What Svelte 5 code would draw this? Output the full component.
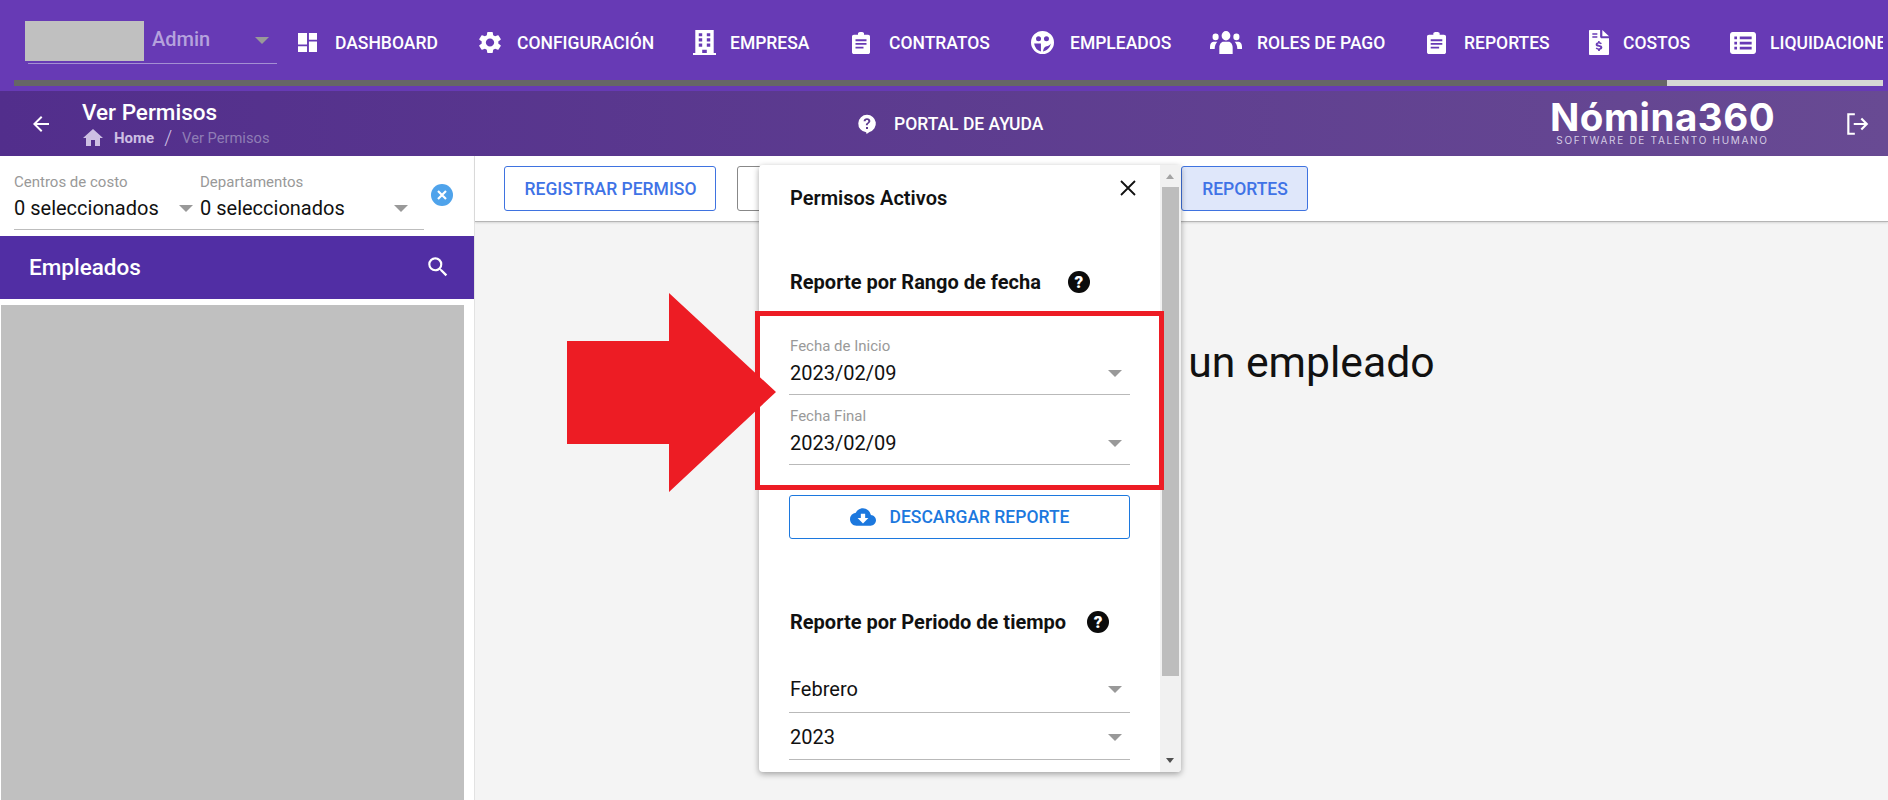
<script>
  const nav = [
    { label: 'DASHBOARD', icon: 'dashboard', w: 19, h: 19, vb: '2 2 20 20', gap: 18, span: 181 },
    { label: 'CONFIGURACIÓN', icon: 'gear', w: 22, h: 23, vb: '2.5 1.5 19 21', gap: 16, span: 214 },
    { label: 'EMPRESA', icon: 'building', w: 23, h: 25, vb: '2 0 20 24', gap: 14, span: 159 },
    { label: 'CONTRATOS', icon: 'clip', w: 18, h: 22, vb: '3 0 18 24', gap: 19, span: 179 },
    { label: 'EMPLEADOS', icon: 'face', w: 23, h: 23, vb: '1 1 22 22', gap: 16, span: 179 },
    { label: 'ROLES DE PAGO', icon: 'users', w: 32, h: 23, vb: '0 4 24 16', gap: 15, span: 217 },
    { label: 'REPORTES', icon: 'clip', w: 19, h: 22, vb: '3 0 18 24', gap: 18, span: 162 },
    { label: 'COSTOS', icon: 'bill', w: 20, h: 25, vb: '3 0 18 24', gap: 14, span: 141 },
    { label: 'LIQUIDACIONES', icon: 'list', w: 26, h: 22, vb: '0 2 24 20', gap: 14, span: 200 }
  ];
</script>

<div class="page">
  <header class="topbar">
    <div class="user-row">
      <div class="user-select">
        <div class="avatar"></div>
        <span class="role">Admin</span>
        <span class="caret role-caret"></span>
      </div>
      <nav class="nav">
        {#each nav as item}
          <div class="nav-item" style="width:{item.span}px;gap:{item.gap}px">
            <svg style="width:{item.w}px;height:{item.h}px" viewBox={item.vb} preserveAspectRatio="none" fill="#fff" fill-rule="evenodd">
              {#if item.icon === 'dashboard'}
                <path d="M2 2h9.500v12H2zM13.500 2H22v7h-8.500zM13.500 11H22v11h-8.500zM2 16h9.500v6H2z" />
              {:else if item.icon === 'gear'}
                <path d="M19.140 12.940c.04-.3.06-.61.06-.94 0-.32-.02-.64-.07-.94l2.030-1.580c.18-.14.23-.41.12-.61l-1.920-3.320c-.12-.22-.37-.29-.59-.22l-2.390.96c-.5-.38-1.030-.7-1.620-.94l-.36-2.540c-.04-.24-.24-.41-.48-.41h-3.840c-.24 0-.43.17-.47.41l-.36 2.540c-.59.24-1.130.57-1.620.94l-2.390-.96c-.22-.08-.47 0-.59.22L2.740 8.870c-.12.21-.08.47.12.61l2.030 1.580c-.05.3-.09.63-.09.94s.02.64.07.94l-2.030 1.580c-.18.14-.23.41-.12.61l1.920 3.320c.12.22.37.29.59.22l2.390-.96c.5.38 1.030.7 1.620.94l.36 2.540c.05.24.24.41.48.41h3.840c.24 0 .44-.17.47-.41l.36-2.540c.59-.24 1.130-.56 1.620-.94l2.390.96c.22.08.47 0 .59-.22l1.920-3.320c.12-.22.07-.47-.12-.61l-2.010-1.580zM12 15.600c-1.980 0-3.600-1.620-3.600-3.600s1.620-3.600 3.600-3.600 3.600 1.620 3.600 3.600-1.620 3.600-3.600 3.600z" />
              {:else if item.icon === 'building'}
                <path d="M4 0h16v22h2v2H2v-2h2zM7 3v3h3V3zM14 3v3h3V3zM7 8v3h3V8zM14 8v3h3V8zM7 13v3h3v-3zM14 13v3h3v-3zM10 19v3h4v-3z" />
              {:else if item.icon === 'clip'}
                <path d="M9 1.500 C9 .6 10 0 12 0 S15 .6 15 1.500 V3 h4 c1.200 0 2 .8 2 2 v17 c0 1.200-.8 2-2 2 H5 c-1.200 0-2-.8-2-2 V5 c0-1.200.8-2 2-2 h4 z M6.500 8v2h11V8z M6.500 12v2h11v-2z M6.500 16v2h8v-2z" />
              {:else if item.icon === 'face'}
                <path d="M12 1a11 11 0 1 0 0 22a11 11 0 0 0 0-22z M8.200 6a2.400 2.400 0 1 1 0 4.800a2.400 2.400 0 0 1 0-4.800z M15.800 6a2.400 2.400 0 1 1 0 4.800a2.400 2.400 0 0 1 0-4.800z M4 13h6.500v7.500a9 9 0 0 1-6.500-7.500z M12.500 20.500c.5-3 1.500-5 3.500-5 1.500 0 2.800-.8 4-2.500-.8 4-3.800 7-7.500 7.500z" />
              {:else if item.icon === 'users'}
                <path d="M12 4a3.300 3.300 0 1 1 0 6.600a3.300 3.300 0 0 1 0-6.600z M4.200 5.800a2.300 2.300 0 1 1 0 4.600a2.300 2.300 0 0 1 0-4.600z M19.800 5.800a2.300 2.300 0 1 1 0 4.600a2.300 2.300 0 0 1 0-4.600z M7 20v-4.500c0-2.400 1.600-4 3-4h4c1.400 0 3 1.600 3 4V20z M0 15c0-2 1-3.500 2.500-3.500h3c-1 1-2 2.500-2 5H0z M24 15c0-2-1-3.500-2.500-3.500h-3c1 1 2 2.500 2 5H24z" />
              {:else if item.icon === 'bill'}
                <path d="M4 0h9v6.500c0 .8.7 1.500 1.500 1.500H21v15c0 .6-.4 1-1 1H4c-.6 0-1-.4-1-1V1c0-.6.4-1 1-1z M15 0l6 6h-6z M6 3v1.500h4.500V3z M6 6v1.500h4.500V6z M11.200 10.500v1.200c-1.400.2-2.200 1.100-2.200 2.200 0 2.800 4.200 1.600 4.200 3 0 .5-.5.8-1.200.8-.8 0-1.500-.3-2-.9l-1 1c.5.6 1.300 1 2.200 1.100v1.300h1.600v-1.300c1.400-.2 2.200-1.100 2.200-2.200 0-2.900-4.200-1.600-4.200-3 0-.5.4-.7 1.100-.7.6 0 1.200.2 1.700.7l1-1c-.5-.5-1.100-.9-2-1v-1.200z" />
              {:else if item.icon === 'list'}
                <path d="M2.500 2h19c1.400 0 2.500 1.100 2.500 2.500v15c0 1.400-1.100 2.500-2.500 2.500h-19C1.100 22 0 20.900 0 19.500v-15C0 3.100 1.100 2 2.500 2z M4 6v2.500h2.500V6z M9 6v2.500h11V6z M4 10.800v2.500h2.500v-2.500z M9 10.800v2.500h11v-2.500z M4 15.500V18h2.500v-2.500z M9 15.500V18h11v-2.500z" />
              {/if}
            </svg>
            <span>{item.label}</span>
          </div>
        {/each}
      </nav>
    </div>
    <div class="hscroll"><div class="hthumb"></div></div>
  </header>

  <div class="subbar">
    <svg class="back" viewBox="0 0 24 24" fill="#fff"><path d="M20 11H7.830l5.590-5.590L12 4l-8 8 8 8 1.410-1.410L7.830 13H20v-2z" /></svg>
    <div class="crumbs">
      <div class="page-title">Ver Permisos</div>
      <div class="path">
        <svg class="home" viewBox="0 0 24 24" fill="#cdbfe3"><path d="M10 20v-6h4v6h5v-8h3L12 3 2 12h3v8z" /></svg>
        <b>Home</b>
        <span class="slash">/</span>
        <span class="here">Ver Permisos</span>
      </div>
    </div>
    <div class="help-link">
      <svg class="help-bubble" viewBox="0 0 24 24" fill="#fff" fill-rule="evenodd">
        <path d="M12 1a10.500 10.500 0 0 1 3 20.600L11.500 24l-.5-2.050A10.500 10.500 0 0 1 12 1z M12 5c-2.400 0-4 1.500-4.100 3.800h2.400c.1-1 .7-1.600 1.700-1.600s1.600.6 1.600 1.400c0 1.800-3 1.800-3 5h2.300c0-2.300 3.100-2.500 3.100-5.100C16 6.500 14.400 5 12 5z M10.800 15.500v2.400h2.400v-2.400z" />
      </svg>
      <span>PORTAL DE AYUDA</span>
    </div>
    <div class="logo">
      <div class="logo-name">Nómina360</div>
      <div class="logo-sub">SOFTWARE DE TALENTO HUMANO</div>
    </div>
    <svg class="logout" viewBox="0 0 24 24" fill="none" stroke="#fff" stroke-width="2">
      <path d="M10 3H4v18h6M9 12h12M16 7l5 5-5 5" />
    </svg>
  </div>

  <div class="content">
    <aside class="sidebar">
      <div class="filters">
        <div class="filter first">
          <label for="cc">Centros de costo</label>
          <div class="value" id="cc">0 seleccionados<span class="caret"></span></div>
        </div>
        <div class="filter second">
          <label for="dep">Departamentos</label>
          <div class="value" id="dep">0 seleccionados<span class="caret"></span></div>
        </div>
        <svg class="clear" viewBox="0 0 22 22">
          <circle cx="11" cy="11" r="11" fill="#4fa3eb" />
          <path d="M7 7l8 8M15 7l-8 8" stroke="#fff" stroke-width="2.200" />
        </svg>
      </div>
      <div class="side-head">
        <span>Empleados</span>
        <svg viewBox="0 0 24 24" fill="#fff"><path d="M15.500 14h-.790l-.280-.270A6.470 6.470 0 0 0 16 9.500 6.500 6.500 0 1 0 9.500 16c1.610 0 3.090-.590 4.230-1.570l.270.280v.790l5 4.990L20.490 19l-4.990-5zm-6 0C7.010 14 5 11.990 5 9.500S7.010 5 9.500 5 14 7.010 14 9.500 11.990 14 9.500 14z" /></svg>
      </div>
      <div class="list-mask"></div>
    </aside>

    <main class="main">
      <div class="toolbar">
        <button class="btn">REGISTRAR PERMISO</button>
        <button class="btn muted" aria-label="Permisos activos"></button>
        <button class="btn active">REPORTES</button>
      </div>
      <div class="empty">Seleccione un empleado</div>
    </main>
  </div>

  <section class="modal">
    <div class="modal-body">
      <h2 class="title">Permisos Activos</h2>
      <h3 class="sec-a">Reporte por Rango de fecha <span class="q">?</span></h3>
      <div class="field f1">
        <div class="f-label">Fecha de Inicio</div>
        <div class="f-value">2023/02/09<span class="caret"></span></div>
      </div>
      <div class="field f2">
        <div class="f-label">Fecha Final</div>
        <div class="f-value">2023/02/09<span class="caret"></span></div>
      </div>
      <button class="download">
        <svg viewBox="0 0 24 24" fill="#1c78de"><path d="M19.350 10.040A7.490 7.490 0 0 0 12 4C9.110 4 6.600 5.640 5.350 8.040A5.994 5.994 0 0 0 0 14c0 3.310 2.690 6 6 6h13c2.760 0 5-2.240 5-5 0-2.640-2.050-4.780-4.650-4.960zM17 13l-5 5-5-5h3V9h4v4h3z" /></svg>
        DESCARGAR REPORTE
      </button>
      <h3 class="sec-b">Reporte por Periodo de tiempo <span class="q">?</span></h3>
      <div class="field f3">
        <div class="f-value">Febrero<span class="caret"></span></div>
      </div>
      <div class="field f4">
        <div class="f-value">2023<span class="caret"></span></div>
      </div>
    </div>
    <svg class="close" viewBox="0 0 16 16" stroke="#111" stroke-width="1.800"><path d="M1 1l14 14M15 1L1 15" /></svg>
    <div class="vscroll">
      <span class="up"></span>
      <div class="vthumb"></div>
      <span class="down"></span>
    </div>
  </section>

  <!-- annotations over the screenshot -->
  <div class="red-box"></div>
  <svg class="red-arrow" viewBox="0 0 210 200">
    <path d="M0 48H102V0L209 99 102 199V151H0z" fill="#ed1c24" />
  </svg>
</div>

<style>
  :global(body) {
    margin: 0;
    font-family: Roboto, "Liberation Sans", sans-serif;
  }

  .page {
    position: relative;
    width: 1888px;
    height: 800px;
    overflow: hidden;
    background: #f4f4f4;
  }

  .topbar {
    height: 91px;
    background: #673ab5;
    padding: 0 5px 0 14px;
    box-sizing: border-box;
  }

  .user-row {
    display: flex;
    height: 80px;
    overflow: hidden;
  }

  .user-select {
    position: relative;
    width: 249px;
    height: 42px;
    margin: 21px 0 0 14px;
    border-bottom: 1px solid #a48fd3;
    display: flex;
    flex: none;
  }

  .avatar {
    width: 119px;
    height: 40px;
    margin-left: -3px;
    background: #c0c0c0;
  }

  .role {
    margin-left: 8px;
    font-size: 20px;
    font-weight: 500;
    color: #b5a2dd;
    line-height: 36px;
  }

  .role-caret {
    position: absolute;
    right: 8px;
    top: 16px;
    border-top-color: #8568c0;
  }

  .nav {
    display: flex;
    margin-left: 21px;
    flex: none;
  }

  .nav-item {
    display: flex;
    align-items: center;
    color: #fff;
    font-size: 17.500px;
    font-weight: 500;
    height: 85px;
    white-space: nowrap;
  }

  .nav-item svg {
    flex: none;
  }

  .hscroll {
    height: 6px;
    background: #666;
    display: flex;
    justify-content: flex-end;
  }

  .hthumb {
    width: 216px;
    background: #d6d6d6;
  }

  .subbar {
    height: 65px;
    display: flex;
    align-items: center;
    color: #fff;
    background: linear-gradient(90deg, #522e8c, #684a93);
  }

  .back {
    width: 24px;
    height: 24px;
    margin-left: 29px;
    flex: none;
  }

  .crumbs {
    margin-left: 29px;
    width: 779px;
    flex: none;
  }

  .page-title {
    font-size: 22.500px;
    font-weight: 500;
    line-height: 26px;
  }

  .path {
    display: flex;
    align-items: center;
    margin-top: 2px;
    font-size: 15px;
    color: #cdbfe3;
    height: 22px;
  }

  .home {
    width: 24px;
    height: 24px;
    margin: 0 9px 0 -1px;
  }

  .slash {
    margin: 0 10px;
    font-size: 20px;
    font-weight: 300;
  }

  .here {
    color: #8f7db5;
    font-size: 14.700px;
  }

  .help-link {
    display: flex;
    align-items: center;
    gap: 17px;
    font-size: 17.500px;
    font-weight: 500;
    width: 693px;
    flex: none;
    margin-left: -4px;
  }

  .help-bubble {
    width: 20px;
    height: 22px;
  }

  .logo {
    width: 225px;
    flex: none;
    text-align: center;
    margin-top: -4px;
  }

  .logo-name {
    font-family: Inter, "Liberation Sans", sans-serif;
    font-size: 38.500px;
    font-weight: 700;
    line-height: 38px;
    letter-spacing: 0.500px;
  }

  .logo-sub {
    font-family: Inter, sans-serif;
    font-size: 10px;
    letter-spacing: 1.700px;
    color: #d4cbe4;
    line-height: 12px;
    margin-top: -2px;
    white-space: nowrap;
  }

  .logout {
    width: 26px;
    height: 26px;
    margin-left: 69px;
    flex: none;
  }

  .content {
    display: flex;
    height: 644px;
  }

  .sidebar {
    width: 475px;
    flex: none;
    background: #fff;
    border-right: 1px solid #e2e2e2;
    box-sizing: border-box;
  }

  .filters {
    position: relative;
    display: flex;
    height: 80px;
    padding-left: 14px;
  }

  .filter {
    margin-top: 17px;
    border-bottom: 1px solid #bdbdbd;
    height: 57px;
    box-sizing: border-box;
  }

  .filter.first {
    width: 186px;
  }

  .filter.second {
    width: 224px;
  }

  .filter label {
    display: block;
    font-size: 15px;
    color: #999;
    line-height: 18px;
  }

  .value {
    position: relative;
    font-size: 20px;
    color: #111;
    line-height: 26px;
    margin-top: 4px;
  }

  .filter.first .caret {
    right: 7px;
  }

  .filter.second .caret {
    right: 16px;
  }

  .clear {
    position: absolute;
    left: 431px;
    top: 28px;
    width: 22px;
    height: 22px;
  }

  .caret {
    position: absolute;
    width: 0;
    height: 0;
    border-left: 7px solid transparent;
    border-right: 7px solid transparent;
    border-top: 7px solid #999;
  }

  .value .caret,
  .f-value .caret {
    top: 10px;
  }

  .side-head {
    height: 63px;
    background: #512ea4;
    display: flex;
    align-items: center;
    justify-content: space-between;
    padding: 0 23px 2px 29px;
    box-sizing: border-box;
    color: #fff;
    font-size: 22.500px;
    font-weight: 500;
  }

  .side-head svg {
    width: 26px;
    height: 26px;
  }

  .list-mask {
    width: 463px;
    height: 500px;
    margin: 6px 0 0 1px;
    background: #c0c0c0;
  }

  .main {
    flex: 1;
    min-width: 0;
  }

  .toolbar {
    height: 66px;
    background: #fff;
    border-bottom: 1px solid #b5b5b5;
    box-shadow: 0 1px 2px rgba(0, 0, 0, 0.12);
    box-sizing: border-box;
    display: flex;
    gap: 21px;
    padding: 10px 0 0 29px;
    align-items: flex-start;
  }

  .btn {
    height: 45px;
    width: 212px;
    background: #fff;
    border: 1px solid #3f73e0;
    border-radius: 3px;
    color: #3f73e6;
    font: 500 17.500px Roboto, sans-serif;
    padding: 0 0 0 1px;
  }

  .btn.muted {
    width: 423px;
    border-color: #888;
  }

  .btn.active {
    width: 127px;
    background: #dfe7fa;
  }

  .empty {
    margin: 116px 0 0 496px;
    font-size: 42.700px;
    line-height: 48px;
    color: #111;
    white-space: nowrap;
  }

  .modal {
    position: absolute;
    left: 759px;
    top: 165px;
    width: 422px;
    height: 607px;
    background: #fff;
    border-radius: 4px;
    box-shadow: 0 2px 6px rgba(0, 0, 0, 0.35);
    overflow: hidden;
  }

  .modal-body {
    padding: 21px 0 0 30px;
    width: 341px;
    color: #111;
  }

  .title,
  h3 {
    margin: 0;
    padding-left: 1px;
    font-size: 20px;
    font-weight: 700;
    line-height: 24px;
    white-space: nowrap;
    display: flex;
    align-items: center;
  }

  .title {
    font-weight: 600;
  }

  .q {
    display: inline-flex;
    align-items: center;
    justify-content: center;
    width: 22px;
    height: 22px;
    border-radius: 50%;
    background: #0b0b0b;
    color: #fff;
    font-size: 17px;
    font-weight: 900;
  }

  .sec-a {
    margin-top: 60px;
  }

  .sec-a .q {
    margin-left: 27px;
  }

  .sec-b {
    margin-top: 71px;
  }

  .sec-b .q {
    margin-left: 21px;
  }

  .field {
    border-bottom: 1px solid #b9b9b9;
  }

  .f1 {
    margin-top: 43px;
  }

  .f2 {
    margin-top: 12px;
  }

  .f3 {
    margin-top: 42px;
    padding-bottom: 10px;
  }

  .f4 {
    margin-top: 11px;
    padding-bottom: 9px;
  }

  .f1,
  .f2 {
    padding-bottom: 8px;
  }

  .f-label {
    padding-left: 1px;
    font-size: 15px;
    line-height: 18px;
    color: #999;
  }

  .f-value {
    position: relative;
    padding-left: 1px;
    font-size: 20px;
    line-height: 26px;
  }

  .f1 .f-value,
  .f2 .f-value {
    margin-top: 5px;
  }

  .f-value .caret {
    right: 8px;
  }

  .download {
    display: flex;
    align-items: center;
    justify-content: center;
    gap: 14px;
    width: 100%;
    height: 44px;
    margin-top: 30px;
    background: #fff;
    border: 1px solid #1c78de;
    border-radius: 3px;
    color: #1c78de;
    font: 500 17.500px Roboto, sans-serif;
  }

  .download svg {
    width: 26px;
    height: 26px;
  }

  .close {
    position: absolute;
    left: 361px;
    top: 15px;
    width: 16px;
    height: 16px;
  }

  .vscroll {
    position: absolute;
    right: 0;
    top: 0;
    bottom: 0;
    width: 21px;
    background: #f1f1f1;
  }

  .vthumb {
    position: absolute;
    left: 2px;
    right: 2px;
    top: 22px;
    height: 489px;
    background: #bdbdbd;
  }

  .up,
  .down {
    position: absolute;
    left: 6px;
    width: 0;
    height: 0;
    border-left: 4.500px solid transparent;
    border-right: 4.500px solid transparent;
  }

  .up {
    top: 9px;
    border-bottom: 5px solid #a3a3a3;
  }

  .down {
    bottom: 9px;
    border-top: 5px solid #505050;
  }

  .red-box {
    position: absolute;
    left: 755px;
    top: 311px;
    width: 409px;
    height: 179px;
    border: 5px solid #ed1c24;
    box-sizing: border-box;
  }

  .red-arrow {
    position: absolute;
    left: 567px;
    top: 293px;
    width: 210px;
    height: 200px;
  }
</style>
